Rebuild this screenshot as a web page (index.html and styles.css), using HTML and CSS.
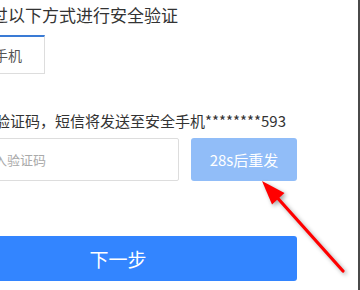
FILE: index.html
```html
<!DOCTYPE html>
<html lang="zh-CN">
<head>
    <meta charset="UTF-8">
    <meta name="viewport" content="width=device-width, initial-scale=1.0">
    <title>安全验证</title>
    <link rel="stylesheet" href="styles.css">
</head>
<body>
    <div class="page">
        <div class="verify">
            <h2 class="verify-title">请通过以下方式进行安全验证</h2>
            <div class="tabs">
                <div class="tab active">安全手机</div>
            </div>
            <p class="hint">请输入验证码，短信将发送至安全手机********593</p>
            <div class="code-row">
                <input type="text" class="code-input" placeholder="请输入验证码">
                <button class="resend-btn" disabled>28s后重发</button>
            </div>
            <button class="next-btn">下一步</button>
        </div>
        <svg class="arrow" width="360" height="290" viewBox="0 0 360 290">
            <line x1="343" y1="271" x2="274" y2="194" stroke="#f00" stroke-width="3.2" stroke-linecap="round"/>
            <polygon points="262,181 284.5,193 272,204.5" fill="#f00"/>
        </svg>
    </div>
</body>
</html>
```
FILE: styles.css
```css
body {
    margin: 0;
    font-family: "Noto Sans CJK SC", "Noto Sans", sans-serif;
    background-color: #4a4a4a;
}
.page {
    position: relative;
    width: 358px;
    height: 290px;
    overflow: hidden;
    background-color: #fff;
}
.verify {
    margin-left: -61px;
    width: 358px;
    padding-top: 3px;
}
.verify-title {
    margin: 0;
    padding-left: 18px;
    font-size: 17px;
    line-height: 24px;
    font-weight: normal;
    color: #333;
    white-space: nowrap;
}
.tabs {
    display: flex;
    margin-top: 8px;
    padding-left: 4px;
}
.tab {
    height: 36px;
    padding: 0 22px 0 22px;
    border: 1px solid #ddd;
    border-top: 2px solid #3a7bd5;
    font-size: 14px;
    line-height: 36px;
    color: #555;
}
.hint {
    margin: 36px 0 0;
    padding-left: 11px;
    font-size: 15px;
    line-height: 22px;
    color: #333;
    white-space: nowrap;
}
.code-row {
    display: flex;
    gap: 12px;
    margin-top: 6px;
}
.code-input {
    box-sizing: border-box;
    width: 240px;
    height: 43px;
    padding: 0 0 0 28px;
    border: 1px solid #ddd;
    border-radius: 2px;
    font-family: inherit;
    font-size: 13px;
    outline: none;
}
.code-input::placeholder {
    color: #aaa;
}
.resend-btn {
    width: 106px;
    height: 43px;
    border: none;
    border-radius: 3px;
    background-color: #91bdf8;
    color: #fff;
    font-family: inherit;
    font-size: 15px;
    padding: 0;
}
.next-btn {
    display: block;
    width: 358px;
    height: 45px;
    margin-top: 55px;
    border: none;
    border-radius: 3px;
    background-color: #3385ff;
    color: #fff;
    font-family: inherit;
    font-size: 19px;
    padding: 0;
}
.arrow {
    position: absolute;
    left: 0;
    top: 0;
    filter: drop-shadow(2px 2px 2px rgba(0, 0, 0, 0.35));
}
```
